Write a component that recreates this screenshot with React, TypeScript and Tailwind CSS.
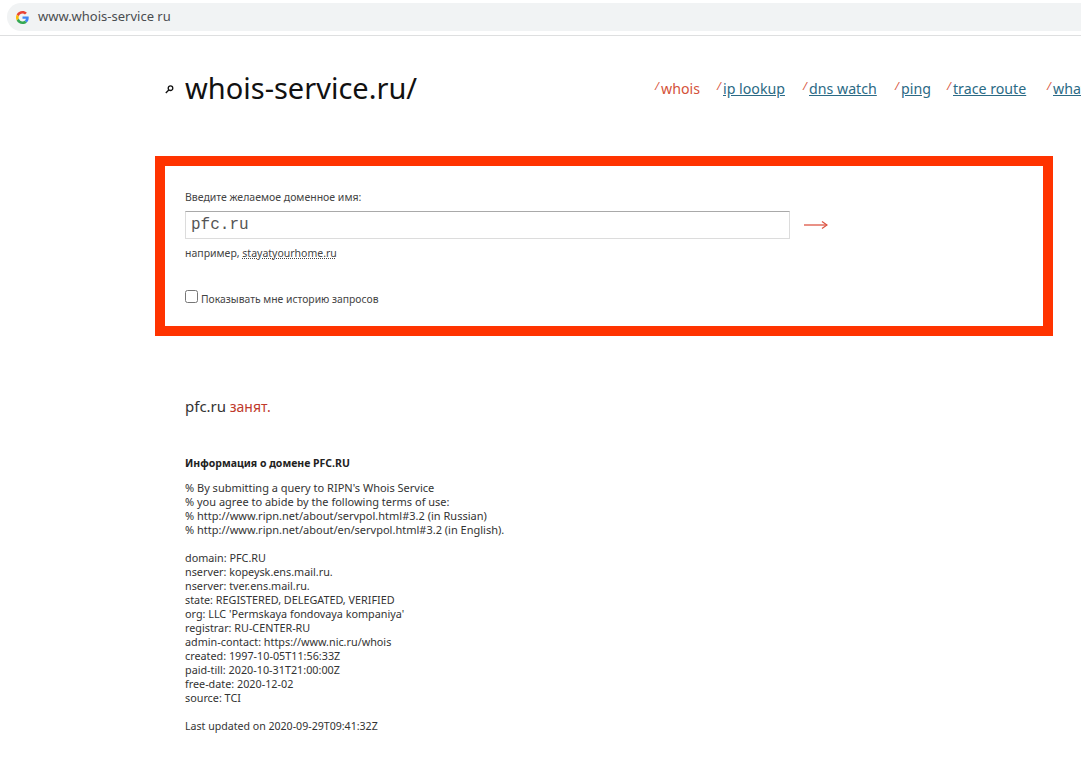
const sans = "font-['Noto_Sans','DejaVu_Sans',sans-serif]"

const navItems = [
  { label: "whois", width: "w-[62px]", active: true },
  { label: "ip lookup", width: "w-[86px]" },
  { label: "dns watch", width: "w-[92px]" },
  { label: "ping", width: "w-[52px]" },
  { label: "trace route", width: "w-[100px]" },
  { label: "what is my ip", width: "w-[120px]" },
]

const notice = [
  "% By submitting a query to RIPN's Whois Service",
  "% you agree to abide by the following terms of use:",
  "% http://www.ripn.net/about/servpol.html#3.2 (in Russian)",
  "% http://www.ripn.net/about/en/servpol.html#3.2 (in English).",
]

const record = [
  "domain: PFC.RU",
  "nserver: kopeysk.ens.mail.ru.",
  "nserver: tver.ens.mail.ru.",
  "state: REGISTERED, DELEGATED, VERIFIED",
  "org: LLC 'Permskaya fondovaya kompaniya'",
  "registrar: RU-CENTER-RU",
  "admin-contact: https://www.nic.ru/whois",
  "created: 1997-10-05T11:56:33Z",
  "paid-till: 2020-10-31T21:00:00Z",
  "free-date: 2020-12-02",
  "source: TCI",
]

function GoogleIcon() {
  return (
    <svg width="13" height="13" viewBox="0 0 48 48">
      <path fill="#EA4335" d="M24 9.5c3.5 0 6.700 1.200 9.200 3.600l6.900-6.900C35.900 2.400 30.500 0 24 0 14.600 0 6.500 5.400 2.600 13.200l8 6.200C12.500 13.700 17.800 9.500 24 9.500z" />
      <path fill="#4285F4" d="M46.900 24.500c0-1.600-.1-3.100-.4-4.500H24v9h12.900c-.6 3-2.200 5.500-4.700 7.200l7.700 6c4.500-4.200 7-10.300 7-17.700z" />
      <path fill="#FBBC05" d="M10.500 28.600c-.5-1.400-.8-3-.8-4.600s.3-3.200.8-4.600l-8-6.200C.9 16.500 0 20.100 0 24s.9 7.500 2.600 10.800l7.900-6.200z" />
      <path fill="#34A853" d="M24 48c6.500 0 11.900-2.100 15.900-5.800l-7.700-6c-2.200 1.400-4.900 2.300-8.200 2.300-6.200 0-11.500-4.200-13.400-9.900l-8 6.200C6.500 42.600 14.600 48 24 48z" />
    </svg>
  )
}

export default function App() {
  return (
    <div className={`h-[767px] w-[1081px] overflow-hidden bg-white ${sans}`}>
      {/* Browser address bar */}
      <div className="h-[36px] border-b border-[#dedfe0] pt-[3px] pl-[7px]">
        <div className="flex h-[28px] items-center gap-[9px] rounded-l-full bg-[#f1f3f4] pl-[9px]">
          <GoogleIcon />
          <span className="text-[13px] text-[#4a4d50]">www.whois-service ru</span>
        </div>
      </div>

      {/* Logo + nav */}
      <div className="flex h-[120px] items-start whitespace-nowrap">
        <div className="ml-[165px] flex w-[490px] shrink-0 items-center gap-[11px] pt-[32px]">
          <svg width="9" height="9" viewBox="0 0 9 9" className="mt-[3px]" fill="none" stroke="#111" strokeWidth="1.300">
            <circle cx="5.500" cy="3.200" r="2.300" />
            <path d="M3.800 5 L0.800 8" />
          </svg>
          <span className="text-[29px] leading-[40px] text-[#111]">whois-service.ru/</span>
        </div>
        <nav className="flex shrink-0 pt-[43px] text-[14.200px] leading-[20px]">
          {navItems.map((item) => (
            <span key={item.label} className={`flex shrink-0 ${item.width}`}>
              <span className="mr-[3px] -mt-[3px] w-[3px] text-[11px] italic text-[#d8573f]">/</span>
              {item.active ? (
                <span className="text-[#d4523a]">{item.label}</span>
              ) : (
                <a href="#" className="text-[#2b6a85] underline">{item.label}</a>
              )}
            </span>
          ))}
        </nav>
      </div>

      {/* Search form */}
      <form className="ml-[155px] h-[180px] w-[898px] border-[10px] border-[#ff3300] pt-[24px] pl-[20px] text-[10.500px] leading-[14px] text-[#444]">
        <div>Введите желаемое доменное имя:</div>
        <div className="mt-[7px] flex items-center">
          <input
            readOnly
            value="pfc.ru"
            className="h-[28px] w-[605px] border border-[#dcdcdc] border-t-[#a9a9a9] pl-[5px] font-['Liberation_Mono',monospace] text-[16px] text-[#555] outline-none"
          />
          <svg width="24" height="10" viewBox="0 0 24 10" className="ml-[14px]" fill="none" stroke="#dd5544" strokeWidth="1.300">
            <path d="M0 5 H23" />
            <path d="M18 1.500 L23 5 L18 8.500" />
          </svg>
        </div>
        <div className="mt-[7px]">
          например, <a href="#" className="underline decoration-dotted">stayatyourhome.ru</a>
        </div>
        <label className="mt-[30px] flex items-start gap-[3px]">
          <input type="checkbox" className="m-0 h-[13px] w-[13px]" />
          <span className="mt-[2px] text-[10.350px]">Показывать мне историю запросов</span>
        </label>
      </form>

      {/* Result */}
      <div className="ml-[185px] pt-[61px] text-[10.800px] leading-[14px] text-[#333]">
        <div className="text-[14px] leading-[18px]">
          <span className="text-[15px]">pfc.ru</span> <span className="text-[#c0392b]">занят.</span>
        </div>
        <div className="mt-[40px] text-[10.500px] font-bold text-[#222]">Информация о домене PFC.RU</div>
        <div className="mt-[11px] text-[11px]">
          {notice.map((line) => (
            <div key={line}>{line}</div>
          ))}
        </div>
        <div className="mt-[14px]">
          {record.map((line) => (
            <div key={line}>{line}</div>
          ))}
        </div>
        <div className="mt-[14px] text-[10.600px]">Last updated on 2020-09-29T09:41:32Z</div>
      </div>
    </div>
  )
}
